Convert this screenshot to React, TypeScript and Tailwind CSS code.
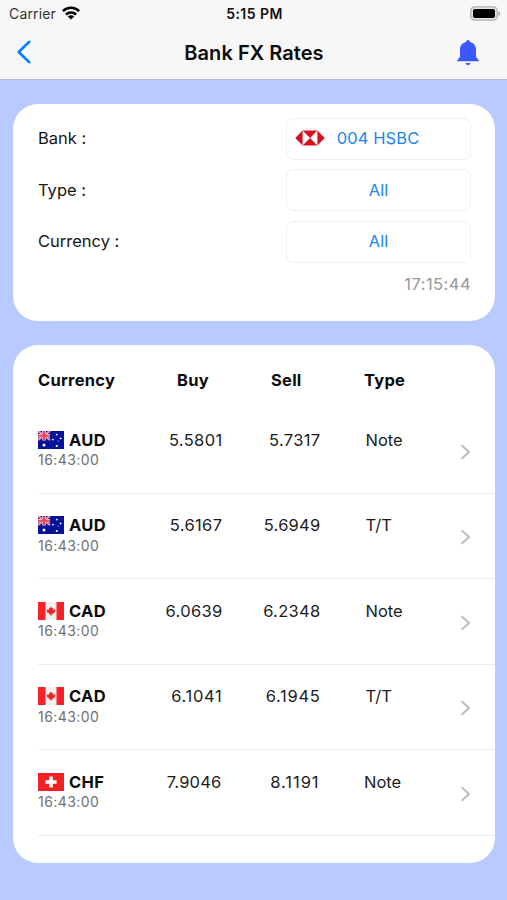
type Country = "AU" | "CA" | "CH";

interface Rate {
  country: Country;
  code: string;
  buy: string;
  buyClass: string;
  sell: string;
  sellClass: string;
  type: string;
  typeClass: string;
}

const rates: Rate[] = [
  { country: "AU", code: "AUD", buy: "5.5801", buyClass: "tracking-[0.35px]", sell: "5.7317", sellClass: "tracking-[0.35px]", type: "Note", typeClass: "pl-[45px]" },
  { country: "AU", code: "AUD", buy: "5.6167", buyClass: "tracking-[0.4px]", sell: "5.6949", sellClass: "tracking-[0.25px]", type: "T/T", typeClass: "pl-[45px]" },
  { country: "CA", code: "CAD", buy: "6.0639", buyClass: "tracking-[0.3px]", sell: "6.2348", sellClass: "tracking-[0.3px]", type: "Note", typeClass: "pl-[45px]" },
  { country: "CA", code: "CAD", buy: "6.1041", buyClass: "tracking-[0.7px]", sell: "6.1945", sellClass: "tracking-[0.7px]", type: "T/T", typeClass: "pl-[45px]" },
  { country: "CH", code: "CHF", buy: "7.9046", buyClass: "mr-[1px] tracking-[0.2px]", sell: "8.1191", sellClass: "mr-[1px] tracking-[0.95px]", type: "Note", typeClass: "pl-[43.5px]" },
];

function Flag({ country }: { country: Country }) {
  if (country === "CA") {
    return (
      <svg viewBox="0 0 26 18" className="h-[18px] w-[26px]">
        <rect width="26" height="18" fill="#f4f0f0" />
        <rect width="7.5" height="18" fill="#f5222a" />
        <rect x="18.5" width="7.5" height="18" fill="#f5222a" />
        <path d="M13 4.500l1.200 1.700.9-.2-.2 2 1.100-.8 1.500.7-.6 1.400.3.600-2.500 1.600.1.900-1.300-.1v1.500h-1v-1.500l-1.300.1.100-.9-2.500-1.600.3-.6-.6-1.400 1.500-.7 1.100.8-.2-2 .9.200z" fill="#f5222a" />
      </svg>
    );
  }
  if (country === "CH") {
    return (
      <svg viewBox="0 0 26 18" className="h-[18px] w-[26px]">
        <rect width="26" height="18" fill="#f52024" />
        <path d="M11.200 3.600h3.600v3.600h3.800v3.600h-3.800v3.600h-3.600v-3.600H7.400V7.200h3.800z" fill="#fff" />
      </svg>
    );
  }
  return (
    <svg viewBox="0 0 26 18" className="h-[18px] w-[26px]">
      <rect width="26" height="18" fill="#06129a" />
      <path d="M0 0l12 9M12 0L0 9" stroke="#f5dce6" strokeWidth="2" />
      <path d="M6 0v9.500M0 4.700h12" stroke="#f5dce6" strokeWidth="3.4" />
      <path d="M0 0l12 9M12 0L0 9" stroke="#ee5565" strokeWidth="1" />
      <path d="M6 0v9.500M0 4.700h12" stroke="#ee4454" strokeWidth="2" />
      <g fill="#fff">
        <circle cx="6" cy="14" r="1.5" />
        <circle cx="18.8" cy="3.6" r=".9" />
        <circle cx="15" cy="8.6" r=".9" />
        <circle cx="22.6" cy="7.4" r=".9" />
        <circle cx="20.2" cy="10" r=".55" />
        <circle cx="18.8" cy="15" r="1.1" />
      </g>
    </svg>
  );
}

function StatusBar() {
  return (
    <div className="grid h-[28px] grid-cols-[1fr_auto_1fr] items-center pl-[9px] pr-[6px] text-[14px] leading-none text-[#111]">
      <div className="flex items-center gap-[6px]">
        <span className="tracking-[0.15px] text-[#333]">Carrier</span>
        <svg viewBox="0 0 18 14" className="-mt-[2px] h-[14px] w-[18px]" fill="none" stroke="#000" strokeWidth="2.5">
          <path d="M.9 5.200a11.500 11.500 0 0 1 16.200 0M3.900 8.500a7.200 7.200 0 0 1 10.200 0" />
          <path d="M9 13.600L5.700 10.600a4.600 4.600 0 0 1 6.600 0z" fill="#000" stroke="none" />
        </svg>
      </div>
      <span className="-ml-[1px] font-semibold tracking-[0.45px]">5:15 PM</span>
      <svg viewBox="0 0 31 15" className="-mt-[1px] h-[15px] w-[31px] justify-self-end">
        <rect x=".8" y=".8" width="26.4" height="13.4" rx="4" fill="#e4e4e4" stroke="#b1b1b1" strokeWidth="1.3" />
        <rect x="3" y="3" width="22" height="9" rx="1.8" fill="#000" />
        <path d="M28.400 5.200c2.400.7 2.400 3.900 0 4.600z" fill="#a5a5a5" />
      </svg>
    </div>
  );
}

function NavBar() {
  return (
    <div className="grid h-[50px] grid-cols-[1fr_auto_1fr] items-center pl-[16px] pr-[28px]">
      <svg viewBox="0 0 16 24" className="-mt-[2px] h-[24px] w-[16px]" fill="none" stroke="#0a7cff" strokeWidth="2.6" strokeLinecap="round" strokeLinejoin="round">
        <path d="M13.300 1.800L2.700 12l10.600 10.200" />
      </svg>
      <h1 className="-mr-[13px] -mt-[1px] text-[20px] font-semibold tracking-[0.05px] text-[#0c0c0c]">Bank FX Rates</h1>
      <svg viewBox="0 0 22 26" className="h-[26px] w-[22px] justify-self-end" fill="#3b58ff">
        <path d="M11 0a2 2 0 0 1 2 2.100c3.900.9 6 3.900 6 7.700v6.200c0 1.200.8 2.100 1.700 3 .8.900 1.100 1.400 1 2.200H.3c-.1-.8.2-1.300 1-2.200.9-.9 1.700-1.800 1.700-3V9.800c0-3.800 2.100-6.800 6-7.700A2 2 0 0 1 11 0z" />
        <path d="M8.400 23h5.200a2.650 2.650 0 0 1-5.200 0z" />
      </svg>
    </div>
  );
}

function HsbcLogo() {
  return (
    <svg viewBox="0 0 30 16" className="h-[16px] w-[30px]">
      <path d="M.3 8l7.300-7.500h14.800L29.700 8l-7.300 7.500H7.600z" fill="#d8101c" />
      <path d="M7.600 .5v15L15 8zM22.400 .5v15L15 8z" fill="#fff" />
    </svg>
  );
}

function Filter({ label, value, logo = false }: { label: string; value: string; logo?: boolean }) {
  return (
    <div className="flex h-[42px] items-center justify-between">
      <span className="text-[16.5px] text-[#161616]">{label}</span>
      <button className="flex h-[42px] w-[185px] items-center justify-center rounded-[7px] border border-[#efeff0] text-[16.5px] text-[#2085f0]">
        {logo && (
          <span className="-ml-[43px] -mt-[1px] mr-[12px]">
            <HsbcLogo />
          </span>
        )}
        <span className={logo ? "tracking-[0.1px]" : ""}>{value}</span>
      </button>
    </div>
  );
}

function RateRow({ rate }: { rate: Rate }) {
  return (
    <div className="flex h-[85.5px] border-b border-[#ebebed] pt-[19.5px]">
      <div className="grid flex-1 grid-cols-[100px_84.5px_98px_1fr] items-start text-[16.5px] leading-[24px] text-[#1c1c1c]">
        <div>
          <div className="flex h-[24px] items-center gap-[5px]">
            <Flag country={rate.country} />
            <span className="font-bold tracking-[0.3px] text-[#0c0c0c]">{rate.code}</span>
          </div>
          <div className="-mt-[0.5px] text-[14px] leading-[18px] tracking-[0.45px] text-[#707072]">16:43:00</div>
        </div>
        <span className={`justify-self-end ${rate.buyClass}`}>{rate.buy}</span>
        <span className={`justify-self-end ${rate.sellClass}`}>{rate.sell}</span>
        <span className={rate.typeClass}>{rate.type}</span>
      </div>
      <svg viewBox="0 0 11 16" className="mr-[24px] mt-[16px] h-[16px] w-[11px]" fill="none" stroke="#bdbdc0" strokeWidth="2.1" strokeLinejoin="round">
        <path d="M1.600 1.200L9 8l-7.400 6.800" />
      </svg>
    </div>
  );
}

export default function App() {
  return (
    <div className="flex h-[900px] w-full flex-col bg-[#b8caff] font-[Inter,sans-serif]">
      <header className="h-[79.5px] shrink-0 border-b border-[#b9bdcf] bg-[#f7f7f7]">
        <StatusBar />
        <NavBar />
      </header>

      <section className="ml-[13px] mr-[12.5px] mt-[24px] flex h-[217px] shrink-0 flex-col gap-[9.5px] rounded-[25px] bg-white pl-[25px] pr-[23.5px] pt-[14px]">
        <Filter label="Bank :" value="004 HSBC" logo />
        <Filter label="Type :" value="All" />
        <Filter label="Currency :" value="All" />
        <div className="text-right text-[16.5px] leading-[24px] tracking-[0.45px] text-[#98989b]">17:15:44</div>
      </section>

      <section className="ml-[13px] mr-[12.5px] mt-[24.5px] h-[518px] shrink-0 rounded-[25px] bg-white pl-[25px]">
        <div className="grid h-[63px] grid-cols-[139px_94px_93px_1fr] pt-[23px] text-[16.5px] font-bold leading-[24px] tracking-[0.25px] text-[#0c0c0c]">
          <span>Currency</span>
          <span>Buy</span>
          <span>Sell</span>
          <span>Type</span>
        </div>
        {rates.map((rate) => (
          <RateRow key={rate.code + rate.type} rate={rate} />
        ))}
      </section>
    </div>
  );
}
